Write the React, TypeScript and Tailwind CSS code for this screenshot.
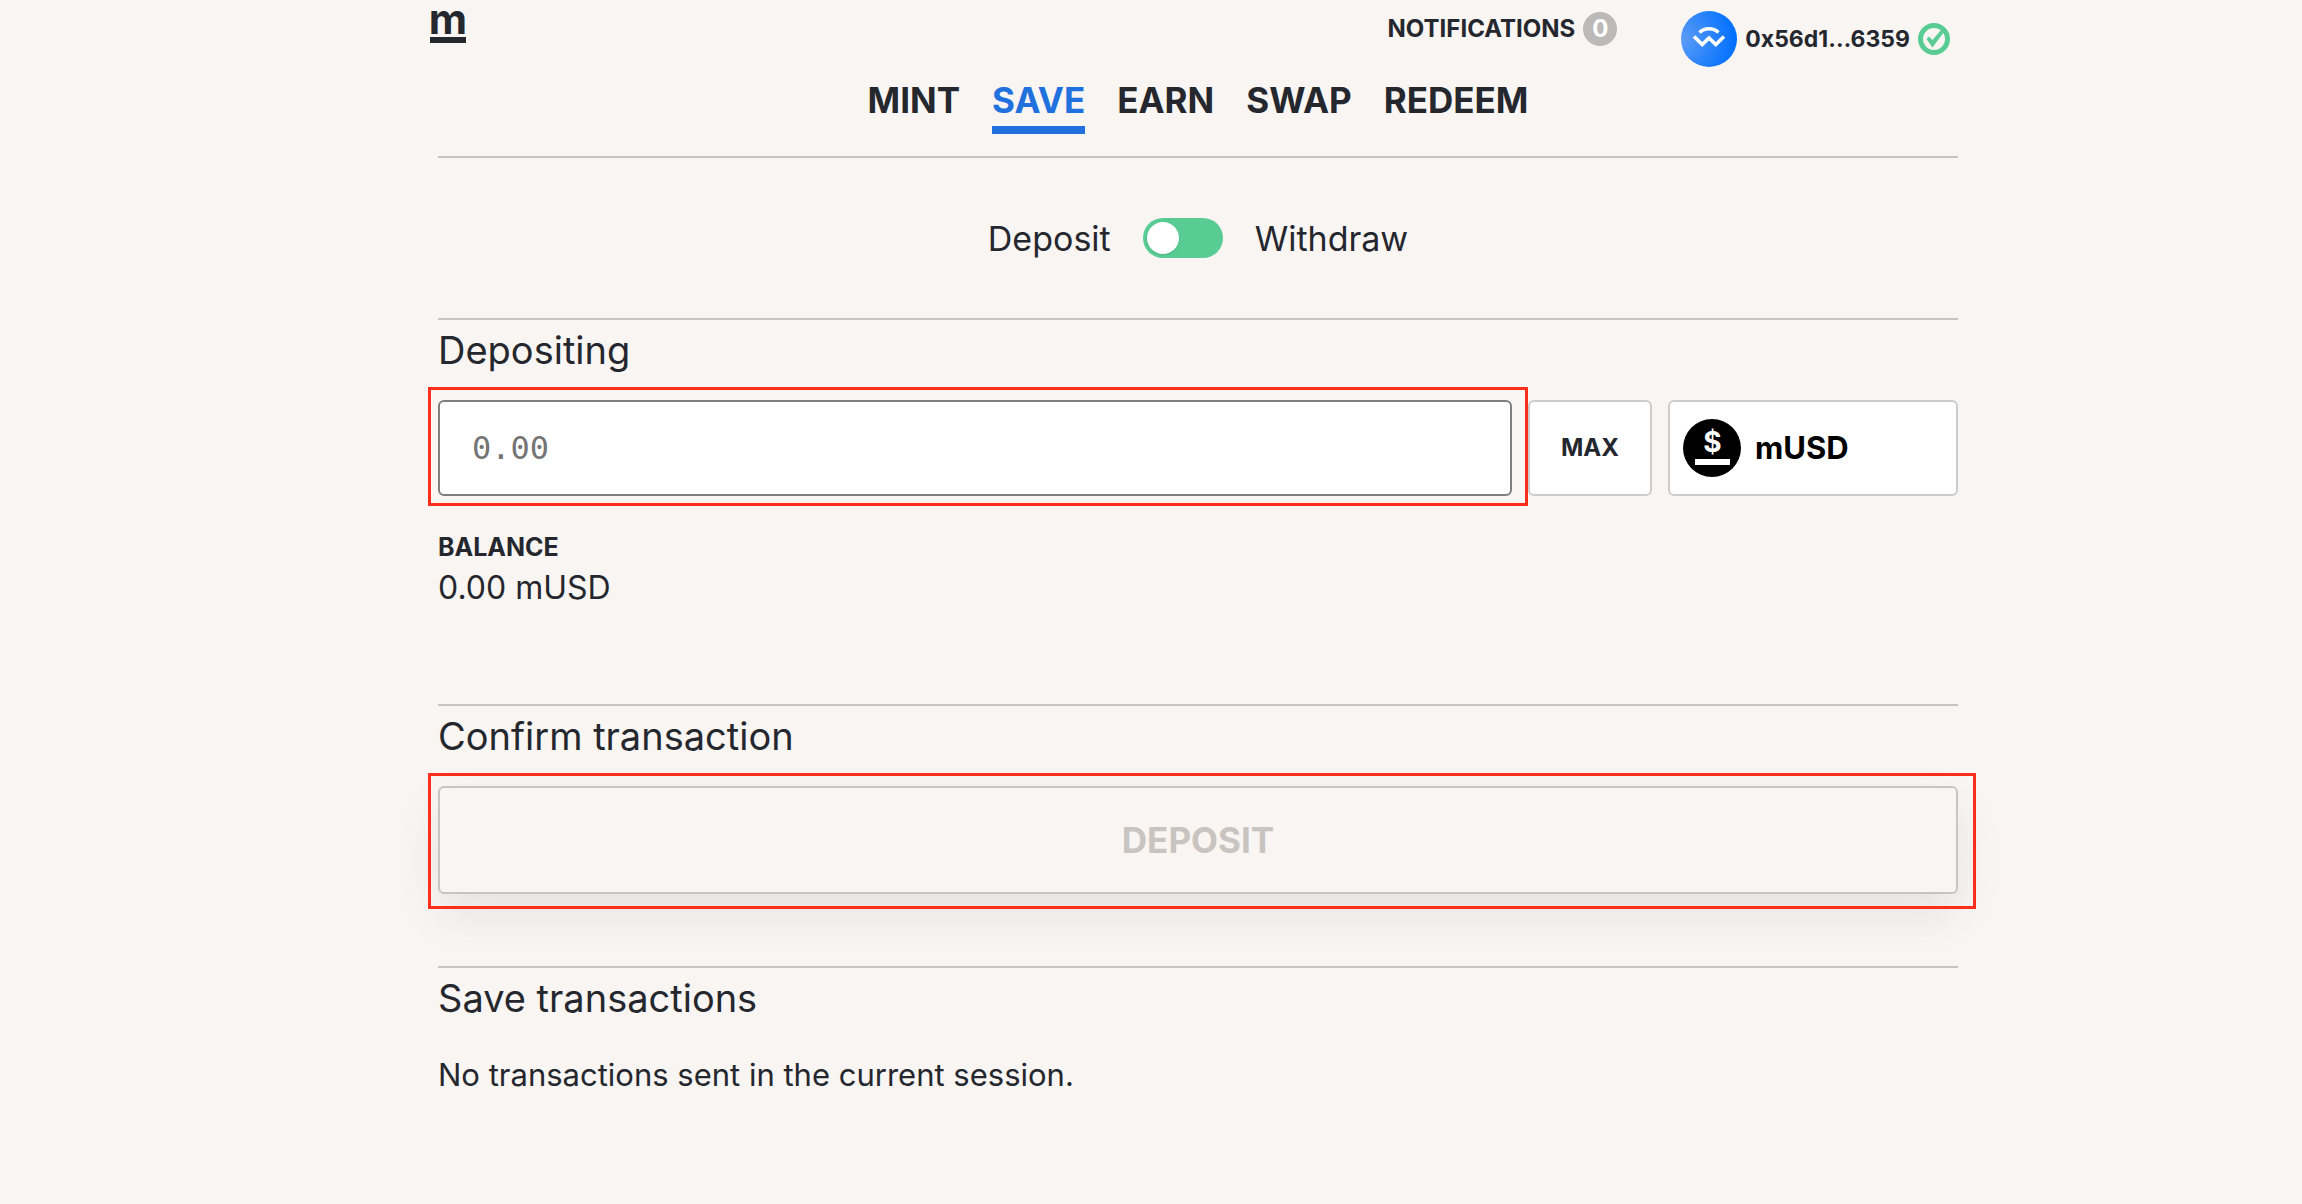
import { useState, type ReactNode } from "react";

const tabs = ["MINT", "SAVE", "EARN", "SWAP", "REDEEM"];

function Section({ title, children, className }: { title: string; children: ReactNode; className: string }) {
  return (
    <section className={`border-t-2 border-[#c8c4c1] ${className}`}>
      <h2 className="text-[38px] leading-[60px]">{title}</h2>
      {children}
    </section>
  );
}

function WalletIcon() {
  return (
    <svg viewBox="0 0 56 56" className="size-14" aria-hidden="true">
      <defs>
        <radialGradient id="wallet" cx="0" cy="0.5" r="1">
          <stop offset="0" stopColor="#5d9df6" />
          <stop offset="1" stopColor="#006fff" />
        </radialGradient>
      </defs>
      <circle cx="28" cy="28" r="28" fill="url(#wallet)" />
      <path d="M18.5 21.5c5.500-5 13.500-5 19 0" fill="none" stroke="#fff" strokeWidth="3.600" />
      <path d="m13 25.500 8.200 8 6.800-6.600 6.800 6.600 8.200-8" fill="none" stroke="#fff" strokeWidth="3.600" strokeLinejoin="miter" />
    </svg>
  );
}

function VerifiedIcon() {
  return (
    <svg viewBox="0 0 32 32" className="size-8" aria-hidden="true">
      <circle cx="16" cy="16" r="13.500" fill="none" stroke="#59cc94" strokeWidth="5" />
      <path d="m8.500 16 2.500-2.500 3.500 3.500L23 7l3 2-11.500 15.500z" fill="#59cc94" />
    </svg>
  );
}

function CoinIcon() {
  return (
    <svg viewBox="0 0 58 58" className="size-[58px]" aria-hidden="true">
      <circle cx="29" cy="29" r="29" />
      <text x="29.500" y="33" textAnchor="middle" fill="#fff" fontFamily="Inter, sans-serif" fontWeight="700" fontSize="28">$</text>
      <rect x="12" y="40" width="35" height="6" fill="#fff" />
    </svg>
  );
}

export default function App() {
  const [tab, setTab] = useState("SAVE");
  const [withdraw, setWithdraw] = useState(false);
  return (
    <div className="min-h-screen bg-[#f9f5f2] pr-[344px] pl-[438px] font-['Inter',sans-serif] text-[#25272e]">
      <header className="flex h-[74px] items-start justify-between pr-2">
        <a href="#" aria-label="mStable home" className="-ml-2 flex w-9 flex-col items-center border-b-6 border-[#25272e] text-[42px] leading-[37px] font-bold">
          m
        </a>
        <div className="flex items-start">
          <button className="mt-3 flex items-center gap-2 text-[24px] leading-[34px] font-bold">
            NOTIFICATIONS
            <span className="flex size-[34px] items-center justify-center rounded-full bg-[#bbbab8] text-white">0</span>
          </button>
          <button className="mt-2.5 ml-16 flex items-center gap-2 text-[23px] leading-[58px] font-bold">
            <WalletIcon />
            <span>0x56d1…6359</span>
            <VerifiedIcon />
          </button>
        </div>
      </header>

      <nav className="flex justify-center gap-8 pb-[22px] text-[35px] leading-[52px] font-bold">
        {tabs.map((t) => (
          <button
            key={t}
            onClick={() => setTab(t)}
            className={t === tab ? "border-b-8 border-[#2070de] text-[#2070de]" : "border-b-8 border-transparent"}
          >
            {t}
          </button>
        ))}
      </nav>

      <div className="flex h-[162px] items-center justify-center gap-8 border-t-2 border-[#c8c4c1] text-[34px]">
        <span>Deposit</span>
        <button
          role="switch"
          aria-checked={withdraw}
          aria-label="Withdraw instead of deposit"
          onClick={() => setWithdraw(!withdraw)}
          className={`flex h-10 w-20 items-center rounded-full bg-[#59cc94] p-1 ${withdraw ? "justify-end" : "justify-start"}`}
        >
          <span className="size-8 rounded-full bg-white shadow" />
        </button>
        <span>Withdraw</span>
      </div>

      <Section title="Depositing" className="pb-[94px]">
        <div className="mt-5 flex h-24 gap-4">
          <div className="relative flex-1">
            <input
              type="text"
              aria-label="Amount to deposit"
              placeholder="0.00"
              className="h-full w-full rounded-md border-2 border-[#7f7f7f] bg-white px-8 font-['DejaVu_Sans_Mono',monospace] text-[32px] placeholder:text-[#757575]"
            />
            <div className="pointer-events-none absolute -top-[13px] -right-4 -bottom-2.5 -left-2.5 border-3 border-[#ff2d1c]" />
          </div>
          <button className="w-31 rounded-md border-2 border-[#cccccc] bg-white text-[24px] font-bold">MAX</button>
          <button className="flex w-[290px] items-center gap-3.5 rounded-md border-2 border-[#cccccc] bg-white pl-[13px] text-[31px] font-bold text-black">
            <CoinIcon />
            mUSD
          </button>
        </div>
        <h3 className="mt-8 text-[25px] leading-[38px] font-bold">BALANCE</h3>
        <p className="text-[32px] leading-11">0.00 mUSD</p>
      </Section>

      <Section title="Confirm transaction" className="pb-[72px]">
        <div className="relative mt-5">
          <button
            disabled
            className="h-27 w-full rounded-md border-2 border-[#c8c4c1] text-[35px] font-bold text-[#c8c4c1] shadow-[0_20px_48px_rgba(0,0,0,0.08)]"
          >
            DEPOSIT
          </button>
          <div className="pointer-events-none absolute -top-[13px] -right-[18px] -bottom-[15px] -left-2.5 border-3 border-[#ff2d1c]" />
        </div>
      </Section>

      <Section title="Save transactions" className="pb-8">
        <p className="mt-6 text-[31px] leading-[46px]">No transactions sent in the current session.</p>
      </Section>
    </div>
  );
}
